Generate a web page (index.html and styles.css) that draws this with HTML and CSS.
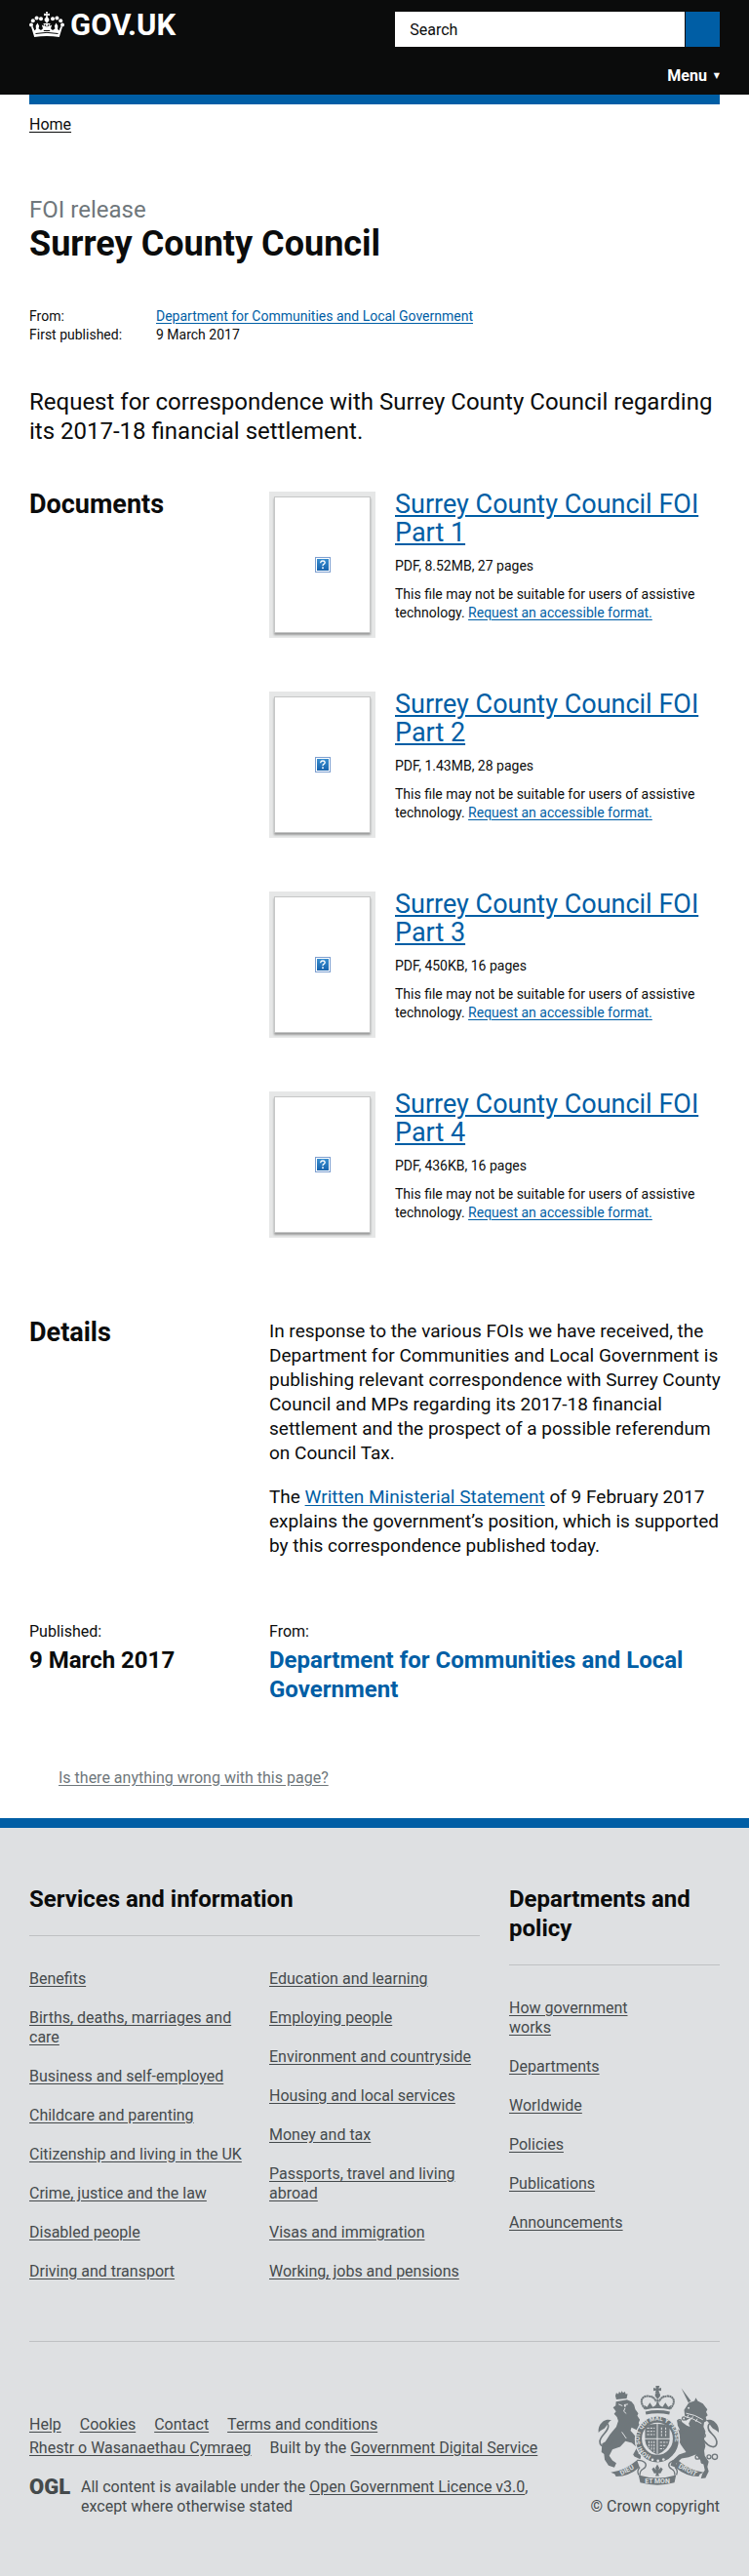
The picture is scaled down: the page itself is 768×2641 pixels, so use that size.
FILE: index.html
```html
<!DOCTYPE html>
<html lang="en">
<head>
<meta charset="utf-8">
<meta name="viewport" content="width=device-width, initial-scale=1">
<title>Surrey County Council - GOV.UK</title>
<link rel="stylesheet" href="styles.css">
</head>
<body>
<svg class="sprite" aria-hidden="true">
  <defs>
    <linearGradient id="blue" x1="0" y1="0" x2="0" y2="1">
      <stop offset="0" stop-color="#3a8fd0"/><stop offset="1" stop-color="#1763ad"/>
    </linearGradient>
    <symbol id="missing" viewBox="0 0 16 16">
      <rect x="0.5" y="0.5" width="15" height="15" fill="#fff" stroke="#7d9fd0"/>
      <rect x="2" y="2" width="12" height="12" fill="url(#blue)"/>
      <path d="M5.8 6.2V5.4Q6 4 8 4t2.2 1.7Q10.200 6.700 9 7.300T8 9.100" fill="none" stroke="#fff" stroke-width="1.300"/>
      <rect x="7.200" y="10.400" width="1.600" height="1.700" fill="#fff"/>
    </symbol>
  </defs>
</svg>

<header class="header">
  <div class="header-inner">
    <a class="logo" href="#">
      <svg class="logo-crown" viewBox="0 0 36 26" aria-hidden="true">
        <g fill="#fff">
          <circle cx="2" cy="13.500" r="2"/><circle cx="3.800" cy="9.200" r="2"/><circle cx="7.600" cy="6.400" r="2"/><circle cx="12" cy="7.300" r="2"/>
          <circle cx="34" cy="13.500" r="2"/><circle cx="32.200" cy="9.200" r="2"/><circle cx="28.400" cy="6.400" r="2"/><circle cx="24" cy="7.300" r="2"/>
          <path d="M17 0h2l-.4 2.200 2.400-.5v2.400l-2.400-.4.4 2.400c1.500.8 1.700 2 1.200 3.200L18 12l-2.200-2.700c-.5-1.200-.3-2.400 1.200-3.200l.4-2.400-2.400.4V1.700l2.400.5z"/>
          <path d="M2 15.500l1.600-.5 1.800 4.300 1.500-1.400-.2-3.300 1.800-3 1.700 3.200-.7 2.500 2.500 1.600 2-1.700-1.200-3.600 2.600 1.200-1-2.800h7.200l-1 2.800 2.600-1.200-1.200 3.600 2 1.700 2.500-1.600-.7-2.500 1.700-3.200 1.800 3-.2 3.300 1.500 1.400 1.800-4.300 1.600.5-3.200 10.500Q18 24 5.200 26z"/>
        </g>
        <path d="M6.500 22.500Q18 20.200 29.500 22.500" fill="none" stroke="#0b0c0c" stroke-width="1"/>
        <path d="M16 13l1.200 2.300M20 13l-1.200 2.300M14.800 19.500h6.400" fill="none" stroke="#0b0c0c" stroke-width="1"/>
      </svg>
      <span>GOV.UK</span>
    </a>
    <form class="search" role="search">
      <input class="search-input" type="search" placeholder="Search" aria-label="Search">
      <button class="search-button" type="button" aria-label="Submit search"></button>
    </form>
  </div>
  <div class="menu-row">
    <button class="menu" type="button">Menu <span class="menu-arrow">▼</span></button>
  </div>
</header>

<main class="page">
  <nav class="breadcrumb"><a href="#">Home</a></nav>

  <p class="kicker">FOI release</p>
  <h1 class="title">Surrey County Council</h1>

  <dl class="meta">
    <dt>From:</dt><dd><a href="#">Department for Communities and Local Government</a></dd>
    <dt>First published:</dt><dd>9 March 2017</dd>
  </dl>

  <p class="summary">Request for correspondence with Surrey County Council regarding its 2017-18 financial settlement.</p>

  <section class="block">
    <h2 class="block-title">Documents</h2>
    <div class="documents">
      <article class="document">
        <div class="thumb"><div class="sheet"><svg class="missing"><use href="#missing"/></svg></div></div>
        <div class="document-text">
          <h3 class="document-title"><a href="#">Surrey County Council FOI Part 1</a></h3>
          <p>PDF, 8.52MB, 27 pages</p>
          <p>This file may not be suitable for users of assistive technology. <a href="#">Request an accessible format.</a></p>
        </div>
      </article>
      <article class="document">
        <div class="thumb"><div class="sheet"><svg class="missing"><use href="#missing"/></svg></div></div>
        <div class="document-text">
          <h3 class="document-title"><a href="#">Surrey County Council FOI Part 2</a></h3>
          <p>PDF, 1.43MB, 28 pages</p>
          <p>This file may not be suitable for users of assistive technology. <a href="#">Request an accessible format.</a></p>
        </div>
      </article>
      <article class="document">
        <div class="thumb"><div class="sheet"><svg class="missing"><use href="#missing"/></svg></div></div>
        <div class="document-text">
          <h3 class="document-title"><a href="#">Surrey County Council FOI Part 3</a></h3>
          <p>PDF, 450KB, 16 pages</p>
          <p>This file may not be suitable for users of assistive technology. <a href="#">Request an accessible format.</a></p>
        </div>
      </article>
      <article class="document">
        <div class="thumb"><div class="sheet"><svg class="missing"><use href="#missing"/></svg></div></div>
        <div class="document-text">
          <h3 class="document-title"><a href="#">Surrey County Council FOI Part 4</a></h3>
          <p>PDF, 436KB, 16 pages</p>
          <p>This file may not be suitable for users of assistive technology. <a href="#">Request an accessible format.</a></p>
        </div>
      </article>
    </div>
  </section>

  <section class="block details">
    <h2 class="block-title">Details</h2>
    <div class="prose">
      <p>In response to the various FOIs we have received, the Department for Communities and Local Government is publishing relevant correspondence with Surrey County Council and MPs regarding its 2017-18 financial settlement and the prospect of a possible referendum on Council Tax.</p>
      <p>The <a href="#">Written Ministerial Statement</a> of 9 February 2017 explains the government’s position, which is supported by this correspondence published today.</p>
    </div>
  </section>

  <section class="block published">
    <div><p>Published:</p><p class="published-value">9 March 2017</p></div>
    <div><p>From:</p><p class="published-value"><a href="#">Department for Communities and Local Government</a></p></div>
  </section>

  <p class="report"><a href="#">Is there anything wrong with this page?</a></p>
</main>

<footer class="footer">
  <div class="footer-inner">
    <div class="footer-nav">
      <section class="services">
        <h2 class="footer-title">Services and information</h2>
        <div class="services-lists">
          <ul class="links">
            <li><a href="#">Benefits</a></li>
            <li><a href="#">Births, deaths, marriages and care</a></li>
            <li><a href="#">Business and self-employed</a></li>
            <li><a href="#">Childcare and parenting</a></li>
            <li><a href="#">Citizenship and living in the UK</a></li>
            <li><a href="#">Crime, justice and the law</a></li>
            <li><a href="#">Disabled people</a></li>
            <li><a href="#">Driving and transport</a></li>
          </ul>
          <ul class="links">
            <li><a href="#">Education and learning</a></li>
            <li><a href="#">Employing people</a></li>
            <li><a href="#">Environment and countryside</a></li>
            <li><a href="#">Housing and local services</a></li>
            <li><a href="#">Money and tax</a></li>
            <li><a href="#">Passports, travel and living abroad</a></li>
            <li><a href="#">Visas and immigration</a></li>
            <li><a href="#">Working, jobs and pensions</a></li>
          </ul>
        </div>
      </section>
      <section>
        <h2 class="footer-title">Departments and policy</h2>
        <ul class="links links-narrow">
          <li><a href="#">How government works</a></li>
          <li><a href="#">Departments</a></li>
          <li><a href="#">Worldwide</a></li>
          <li><a href="#">Policies</a></li>
          <li><a href="#">Publications</a></li>
          <li><a href="#">Announcements</a></li>
        </ul>
      </section>
    </div>

    <div class="footer-meta">
      <div class="footer-legal">
        <ul class="legal-links">
          <li><a href="#">Help</a></li>
          <li><a href="#">Cookies</a></li>
          <li><a href="#">Contact</a></li>
          <li><a href="#">Terms and conditions</a></li>
          <li><a href="#">Rhestr o Wasanaethau Cymraeg</a></li>
          <li>Built by the <a href="#">Government Digital Service</a></li>
        </ul>
        <div class="licence">
          <span class="ogl">OGL</span>
          <p>All content is available under the <a href="#">Open Government Licence v3.0</a>, except where otherwise stated</p>
        </div>
      </div>
      <a class="copyright" href="#">
        <svg class="crest" viewBox="39 47 375 308" aria-hidden="true">
          <defs>
            <path id="garter" d="M222 268a55 57 0 1 1 .1 0"/>
          </defs>
          <g fill="#6f777b">
            <!-- central crown -->
            <path d="M217 47h12l-3 8 8-2v10l-8-2 3 9h-14l3-9-8 2V53l8 2z"/>
            <circle cx="223" cy="76" r="8"/>
            <path d="M184 121l-3-14 9 6 9-14 9 14 8-5 7-12 7 12 8 5 9-14 9 14 9-6-3 14q-39-9-78 0z"/>
            <path d="M185 127q38-9 76 0l-2 9q-36-8-72 0z"/>
            <g fill="none" stroke="#6f777b" stroke-width="6" stroke-dasharray="6 1">
              <path d="M184 118C164 96 174 79 192 79q20 0 26 17"/>
              <path d="M262 118c20-22 10-39-8-39q-20 0-26 17"/>
              <path d="M223 82v24"/>
            </g>
            <!-- lion -->
            <path d="M92 78l3-9 6 4 3-8 5 5 3-7 4 6 6-4 2 8 6-1-3 14-32 3z"/>
            <path d="M94 96l34-6 14 6 8 10 4 14 9 12-3 8 8 12-4 10 6 14 10 8-2 12 8 8-6 8-12-6-10-22-16-8-3 10 14 16 20 14 6 16-10 14-6 12h10l-4 16-18-8-4-6 12-22-16-14-20-6-16 18-24 8-10 20 10 14 12 8-6 14-18-6-12-18-2-18-8-6 2-26 10-6 14-22 20-24 6-18-4-12-9-10 6-8-9-12 8-6z"/>
            <path d="M88 216c-20 24-44 24-44 4 0-20 28-30 26-50-1-8-8-9-12-4" fill="none" stroke="#6f777b" stroke-width="5"/>
            <path d="M40 192c-2-18 6-28 16-36 10-6 18-4 24-3-12 8-14 20-22 26-8 5-14 6-18 13z"/>
            <!-- unicorn -->
            <path d="M296 54l30 40-8 5z"/>
            <path d="M305 122l14-22 18-6 4-10 6 10 16 8 14 18-4 8 5 10-6 6 3 12-8 4-2 14 6 14-4 24 4 22-4 14 2 16 12 18-4 16 4 14-10 20-14 2 4-14 8-12-4-18-14-18-10-12-22 8-22 4-16 14-2 14-16-6 4-14 22-20 22-8-16-22-8-16-18-18-10-26 8-6 14 14 12 8-8-16-2-18 14 6 16 12 10 4-4-10 8-16-8 2-10 6z"/>
            <path d="M364 214c18 26 44 30 42 6-3-24-32-28-26-50 2-7 8-8 12-3" fill="none" stroke="#6f777b" stroke-width="5"/>
            <path d="M412 192c2-18-6-28-16-36-9-6-18-4-24-3 12 8 14 20 22 26 8 5 14 6 18 13z"/>
            <g fill="none" stroke="#6f777b" stroke-width="4">
              <circle cx="346" cy="268" r="6"/><circle cx="364" cy="281" r="6"/><circle cx="382" cy="267" r="6"/><circle cx="400" cy="267" r="8"/><circle cx="366" cy="201" r="5"/>
              <circle cx="304" cy="148" r="5"/><circle cx="291" cy="157" r="5"/><circle cx="298" cy="187" r="5"/>
            </g>
            <!-- garter and shield -->
            <ellipse cx="222" cy="213" rx="68" ry="73" stroke="#dee0e2" stroke-width="4"/>
            <ellipse cx="222" cy="211" rx="48" ry="50" fill="#dee0e2"/>
            <path d="M184 172q38-14 76 0v44q-2 28-38 44-36-16-38-44z"/>
          </g>
          <g fill="none" stroke="#dee0e2" stroke-width="3">
            <path d="M222 164v94M183 211h78"/>
            <path d="M190 178h24M190 188h24M190 198h24M230 222h24M230 232h20M230 242h12M235 176v28M248 176v28M196 218v22M204 218v30M212 218v34" stroke-dasharray="7 3"/>
            <path d="M307 142q24 4 52 22M311 132q28 4 52 20M318 137l-4 9M332 142l-5 9M346 149l-5 9"/>
            <path d="M102 104l12 5M119 106l12-2M122 116l-4 10 8 7M112 190l14 20"/>
          </g>
          <circle cx="122" cy="110" r="3" fill="#dee0e2"/>
          <circle cx="319" cy="116" r="3" fill="#dee0e2"/>
          <g fill="#dee0e2"><circle cx="207" cy="276" r="4"/><circle cx="224" cy="279" r="4"/><circle cx="241" cy="275" r="4"/></g>
          <text class="crest-text crest-garter"><textPath href="#garter" startOffset="20">HONI SOIT QUI MAL Y PENSE</textPath></text>
          <!-- motto scroll -->
          <g fill="#6f777b">
            <path d="M78 315q44-6 81-38l8 22q-32 28-73 29l-4-8z"/>
            <path d="M366 315q-44-6-81-38l-8 22q32 28 73 29l4-8z"/>
            <path d="M164 323q58 18 116 0l-5 24q-53 15-106 0z"/>
            <path d="M222 290l6 11-2 7 7-9 6 6-7 13h-7l3 8h-12l3-8h-7l-7-13 6-6 7 9-2-7z"/>
          </g>
          <g fill="none" stroke="#6f777b" stroke-width="4">
            <path d="M159 278c20-2 32 10 26 20-6 11-18 4-17 26M285 278c-20-2-32 10-26 20 6 11 18 4 17 26M168 299c-8 8-9 14-4 24M277 299c8 8 9 14 4 24"/>
          </g>
          <text class="crest-text" x="222" y="350" text-anchor="middle">ET MON</text>
          <text class="crest-text" x="131" y="314" text-anchor="middle" transform="rotate(-28 131 314)">DIEU</text>
          <text class="crest-text" x="313" y="314" text-anchor="middle" transform="rotate(28 313 314)">DROIT</text>
        </svg>
        <span>© Crown copyright</span>
      </a>
    </div>
  </div>
</footer>
</body>
</html>
```

FILE: styles.css
```css
* { box-sizing: border-box; }

body, h1, h2, h3, p, dl, dd, ul { margin: 0; padding: 0; }

body {
  background: #fff;
  color: #0b0c0c;
  font-family: Roboto, "Liberation Sans", sans-serif;
  font-size: 16px;
  line-height: 20px;
}

a { color: #005ea5; text-underline-offset: 2px; }
ul { list-style: none; }
.sprite { position: absolute; width: 0; height: 0; }

/* Header */
.header { background: #0b0c0c; padding: 12px 30px 9px; }
.header-inner { display: flex; justify-content: space-between; align-items: flex-start; }
.logo { display: flex; gap: 6px; color: #fff; font-size: 31px; font-weight: 700; line-height: 28px; text-decoration: none; }
.logo-crown { width: 36px; height: 26px; }
.search { display: flex; gap: 1px; flex: 0 0 47%; }
.search-input { flex: 1; min-width: 0; height: 36px; padding: 0 15px; border: 0; border-radius: 0; background: #fff; font: inherit; appearance: none; }
.search-input::placeholder { color: #0b0c0c; opacity: 1; }
.search-button { width: 35px; border: 0; background: #005ea5; }
.menu-row { display: flex; justify-content: flex-end; margin-top: 20px; }
.menu { display: flex; gap: 7px; padding: 0; border: 0; background: none; color: #fff; font: inherit; font-weight: 700; }
.menu-arrow { font-family: "DejaVu Sans", sans-serif; font-size: 8px; }

/* Page */
.page { margin: 0 30px; border-top: 10px solid #005ea5; padding-bottom: 31px; }
.breadcrumb { padding-top: 11px; }
.breadcrumb a { color: #0b0c0c; }
.kicker { margin-top: 62px; color: #6f777b; font-size: 24px; line-height: 30px; }
.title { font-size: 36px; line-height: 40px; }
.meta { display: grid; grid-template-columns: 130px 1fr; margin-top: 45px; font-size: 14px; line-height: 19px; }
.summary { margin-top: 44px; font-size: 24px; line-height: 30px; }

.block { display: grid; grid-template-columns: 216px 1fr; column-gap: 30px; margin-top: 46px; }
.block-title { font-size: 27px; line-height: 29px; }
.documents { display: grid; gap: 54px; }
.document { display: flex; gap: 20px; }
.thumb { flex: none; width: 109px; height: 150px; margin-top: 1px; padding: 5px; background: #e6e7e7; }
.sheet { display: flex; align-items: center; justify-content: center; height: 140px; border: 1px solid #c6c7c7; background: #fff; box-shadow: 0 2px 2px #9a9b9b; }
.missing { width: 16px; height: 16px; }
.document-text { font-size: 14px; line-height: 19px; }
.document-text p { margin-top: 10px; }
.document-title { font-size: 27px; font-weight: 400; line-height: 29px; }

.details { margin-top: 83px; }
.prose { margin-right: -6px; font-size: 19px; line-height: 25px; }
.prose p + p { margin-top: 20px; }

.published { margin-top: 66px; }
.published-value { margin-top: 4px; font-size: 24px; font-weight: 700; line-height: 30px; }
.published-value a { text-decoration: none; }

.report { margin-top: 66px; padding-left: 30px; }
.report a { color: #6f777b; }

/* Footer */
.footer { border-top: 10px solid #005ea5; background: #dee0e2; color: #454a4c; }
.footer a { color: #454a4c; }
.footer-inner { padding: 58px 30px 61px; }
.footer-nav { display: grid; grid-template-columns: minmax(0, 77fr) minmax(0, 36fr); column-gap: 30px; }
.footer-title { padding-bottom: 22px; border-bottom: 1px solid #bfc1c3; color: #0b0c0c; font-size: 24px; line-height: 30px; }
.services-lists { display: grid; grid-template-columns: 1fr 1fr; column-gap: 30px; }
.links { display: flex; flex-direction: column; gap: 20px; margin-right: -8px; padding-top: 34px; }
.links-narrow { width: 65%; }

.footer-meta { display: flex; justify-content: space-between; align-items: flex-end; gap: 20px; margin-top: 61px; padding-top: 45px; border-top: 1px solid #bfc1c3; }
.legal-links { display: flex; flex-wrap: wrap; column-gap: 19px; line-height: 24px; }
.licence { display: flex; gap: 12px; margin-top: 18px; }
.ogl { width: 41px; font-size: 22px; font-weight: 900; line-height: 20px; }
.licence p { flex: 1; }
.footer-legal { flex: 0 1 530px; }
.footer a.copyright { display: flex; flex: none; flex-direction: column; align-items: flex-end; gap: 12px; text-decoration: none; }
.crest { width: 125px; height: 102px; }
.crest-text { fill: #dee0e2; font-family: Roboto, sans-serif; font-size: 21px; font-weight: 700; }
.crest-garter { font-size: 19px; }
```
